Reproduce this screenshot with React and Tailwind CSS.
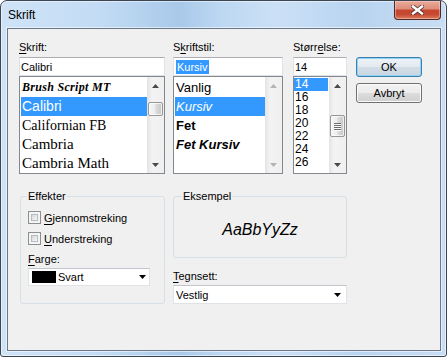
import React from 'react';

const sans = "font-['Liberation_Sans',Arial,sans-serif]";
const serif = "font-['Liberation_Serif','Times_New_Roman',serif]";

const Acc = ({ children }) => (
  <span className="underline decoration-1 underline-offset-[2px]">{children}</span>
);

const Tri = ({ down, color = '#3f3f3f' }) => (
  <svg width="7" height="4" viewBox="0 0 7 4" className="block">
    <path d={down ? 'M0 0H7L3.5 4Z' : 'M0 4H7L3.5 0Z'} fill={color} />
  </svg>
);

const ScrollBar = ({ thumb, grip, disabled }) => (
  <div className="flex w-[17px] shrink-0 flex-col bg-[linear-gradient(90deg,#e4e4e4,#f3f3f3_30%,#efefef)]">
    <div className="flex h-[17px] items-center justify-center">
      <Tri color={disabled ? '#b4b4b4' : '#4a4a4a'} />
    </div>
    <div className="flex-1">
      {thumb && (
        <div
          className={`${thumb} mx-auto flex w-[15px] flex-col items-center justify-center gap-[1px] rounded-[2px] border border-[#979797] bg-[linear-gradient(90deg,#f7f7f7,#ededed_45%,#dadada_55%,#c8c8c8)] shadow-[inset_0_0_0_1px_rgba(255,255,255,0.7)]`}
        >
          {grip &&
            [0, 1, 2, 3].map((i) => (
              <div key={i} className="h-[1px] w-[7px] bg-[#6a6a6a] shadow-[0_1px_0_#ffffff]" />
            ))}
        </div>
      )}
    </div>
    <div className="flex h-[17px] items-center justify-center">
      <Tri down color={disabled ? '#b4b4b4' : '#4a4a4a'} />
    </div>
  </div>
);

const TextBox = ({ children }) => (
  <div className="flex h-[19px] items-center border border-[#dfe3e8] border-t-[#abadb3] bg-white pl-[1px] leading-[14px]">
    {children}
  </div>
);

const fonts = [
  { name: 'Brush Script MT', cls: `${serif} text-[12px] font-bold italic tracking-[0.3px]` },
  { name: 'Calibri', cls: `${sans} text-[14px]`, sel: true },
  { name: 'Californian FB', cls: `${serif} text-[14px]` },
  { name: 'Cambria', cls: `${serif} text-[15px]` },
  { name: 'Cambria Math', cls: `${serif} text-[15px]` },
];

const styles = [
  { name: 'Vanlig', cls: '' },
  { name: 'Kursiv', cls: 'italic', sel: true },
  { name: 'Fet', cls: 'font-bold' },
  { name: 'Fet Kursiv', cls: 'font-bold italic' },
];

const sizes = ['14', '16', '18', '20', '22', '24', '26'];

const Check = ({ acc, rest }) => (
  <div className="flex h-[13px] items-center">
    <div className="h-[13px] w-[13px] border border-[#8e8f8f] bg-[#f4f4f4] p-[2px]">
      <div className="h-full w-full border border-[#b7bcc2] bg-[linear-gradient(135deg,#d4d7db,#f7f7f7)]" />
    </div>
    <span className="ml-[3px] leading-[14px]">
      <Acc>{acc}</Acc>
      {rest}
    </span>
  </div>
);

const CloseButton = () => (
  <div className="mr-[5px] flex h-[19px] w-[47px] items-center justify-center rounded-b-[4px] border border-t-0 border-[#4f2a26] bg-[linear-gradient(#e9ab9b,#dd8c78_45%,#c7452f_50%,#c54a33_75%,#dc7d5c)] shadow-[inset_0_0_0_1px_rgba(255,220,210,0.45)]">
    <svg width="13" height="10" viewBox="0 0 13 10">
      <path d="M2 1.5L11 8.5M11 1.5L2 8.5" stroke="#3a2a28" strokeWidth="4.2" strokeLinecap="square" opacity="0.75" />
      <path d="M2 1.5L11 8.5M11 1.5L2 8.5" stroke="#ffffff" strokeWidth="2.4" strokeLinecap="square" />
    </svg>
  </div>
);

export default function App() {
  return (
    <div className="h-[357px] w-[447px] bg-white">
      <div
        className={`flex h-[357px] w-[447px] flex-col rounded-t-[7px] rounded-b-[3px] border border-[#3c4653] bg-[linear-gradient(90deg,#cfe3f7_0%,#c3dcf4_22%,#a9c9ea_40%,#bed8f2_50%,#cbe0f6_62%,#b9d4f0_80%,#c9def4_100%)] shadow-[inset_0_0_0_1px_rgba(255,255,255,0.5)] ${sans} text-[11px] text-black`}
      >
        <div className="flex h-[27px] shrink-0 items-start justify-between">
          <div className="pl-[7px] pt-[7px] text-[12px] leading-[15px]">Skrift</div>
          <CloseButton />
        </div>

        <div className="ml-[6px] h-[323px] w-[434px] border border-[#6b7889] bg-[#f0f0f0] pl-[11px] pt-[11px] shadow-[0_0_0_1px_rgba(255,255,255,0.55)]">
          <div className="flex">
            <div className="w-[146px]">
              <div className="h-[14px] leading-[14px]">
                <Acc>S</Acc>krift:
              </div>
              <div className="mt-[3px]">
                <TextBox>Calibri</TextBox>
              </div>
              <div className="flex h-[98px] border border-[#828790] bg-white">
                <div className="flex-1 pl-[1px] pt-[1px]">
                  {fonts.map((f) => (
                    <div
                      key={f.name}
                      className={`h-[19px] truncate pl-[1px] leading-[19px] ${f.cls} ${f.sel ? 'bg-[#3399ff] text-white' : ''}`}
                    >
                      {f.name}
                    </div>
                  ))}
                </div>
                <ScrollBar thumb="mt-[8px] h-[14px]" />
              </div>
            </div>

            <div className="ml-[8px] w-[110px]">
              <div className="h-[14px] leading-[14px]">
                S<Acc>k</Acc>riftstil:
              </div>
              <div className="mt-[3px]">
                <TextBox>
                  <span className="ml-[1px] h-[14px] bg-[#3399ff] px-[1px] text-white">Kursiv</span>
                </TextBox>
              </div>
              <div className="flex h-[98px] border border-[#828790] bg-white">
                <div className="flex-1 pl-[1px] pt-[1px]">
                  {styles.map((s) => (
                    <div
                      key={s.name}
                      className={`h-[19px] pl-[1px] text-[13px] leading-[19px] ${s.cls} ${s.sel ? 'bg-[#3399ff] text-white' : ''}`}
                    >
                      {s.name}
                    </div>
                  ))}
                </div>
                <ScrollBar disabled />
              </div>
            </div>

            <div className="ml-[10px] w-[54px]">
              <div className="h-[14px] leading-[14px]">
                Størr<Acc>e</Acc>lse:
              </div>
              <div className="mt-[3px]">
                <TextBox>14</TextBox>
              </div>
              <div className="flex h-[98px] border border-[#828790] bg-white">
                <div className="flex-1 pr-[1px] pt-[1px]">
                  {sizes.map((s, i) => (
                    <div
                      key={s}
                      className={`flex h-[13px] items-center pl-[1px] text-[12px] leading-[13px] ${i === 0 ? 'bg-[#3399ff] text-white' : ''}`}
                    >
                      {s}
                    </div>
                  ))}
                </div>
                <ScrollBar thumb="mt-[21px] h-[22px]" grip />
              </div>
            </div>

            <div className="ml-[9px] mt-[17px] flex w-[66px] flex-col gap-[6px]">
              <button className="flex h-[20px] items-center justify-center rounded-[3px] border border-[#3c7fb1] bg-[linear-gradient(#eef3f7,#e2e9ef_50%,#d2dde6_50%,#cbd7e1)] shadow-[inset_0_0_0_1px_#8fd3f5]">
                OK
              </button>
              <button className="flex h-[20px] items-center justify-center rounded-[3px] border border-[#707070] bg-[linear-gradient(#f2f2f2,#ebebeb_50%,#dddddd_50%,#cfcfcf)] shadow-[inset_0_0_0_1px_#fbfbfb]">
                Avbryt
              </button>
            </div>
          </div>

          <div className="mt-[15px] flex">
            <fieldset className="ml-[1px] h-[115px] w-[145px] rounded-[3px] border border-[#d5dfe5]">
              <legend className="ml-[6px] px-[1px] leading-[14px]">Effekter</legend>
              <div className="pl-[7px] pt-[8px]">
                <Check acc="G" rest="jennomstreking" />
                <div className="mt-[8px]">
                  <Check acc="U" rest="nderstreking" />
                </div>
                <div className="mt-[7px] h-[14px] leading-[14px]">
                  <Acc>F</Acc>arge:
                </div>
                <div className="mt-[2px] flex h-[18px] w-[122px] items-center border border-[#dfe3e8] border-t-[#c2c6cc] bg-white">
                  <div className="ml-[3px] h-[12px] w-[24px] bg-black" />
                  <span className="ml-[2px] leading-[14px]">Svart</span>
                  <div className="ml-auto mr-[3px]">
                    <Tri down color="#000000" />
                  </div>
                </div>
              </div>
            </fieldset>

            <div className="ml-[8px] w-[174px]">
              <fieldset className="h-[69px] rounded-[3px] border border-[#d5dfe5]">
                <legend className="ml-[8px] px-[1px] leading-[14px]">Eksempel</legend>
                <div className="flex h-[54px] items-center justify-center text-[16px] italic">AaBbYyZz</div>
              </fieldset>
              <div className="mt-[11px] h-[14px] leading-[14px]">
                <Acc>T</Acc>egnsett:
              </div>
              <div className="mt-[2px] flex h-[19px] items-center border border-[#dfe3e8] border-t-[#c2c6cc] bg-white pl-[2px]">
                <span className="leading-[14px]">Vestlig</span>
                <div className="ml-auto mr-[5px]">
                  <Tri down color="#000000" />
                </div>
              </div>
            </div>
          </div>
        </div>
      </div>
    </div>
  );
}
